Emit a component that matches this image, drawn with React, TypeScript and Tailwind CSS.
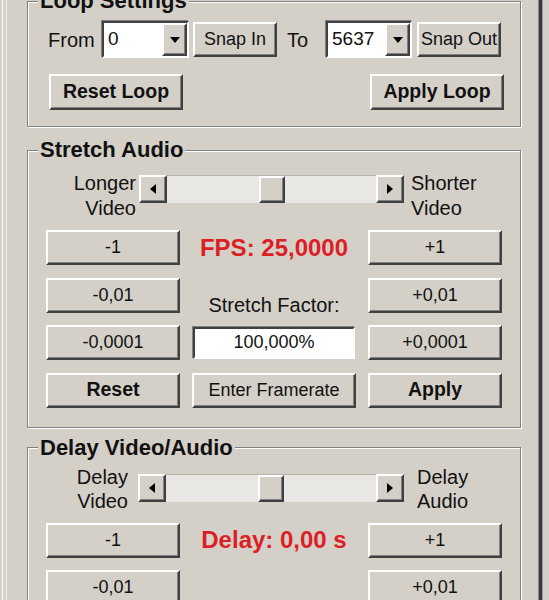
import React from "react";

const raised =
  "bg-[#d4d0c8] border-2 border-t-white border-l-white border-r-[#404040] border-b-[#404040] shadow-[inset_-1px_-1px_0_#808080]";
const sunken =
  "border-2 border-t-[#404040] border-l-[#404040] border-r-white border-b-white shadow-[-1px_-1px_0_#808080]";

function Btn({
  children,
  bold,
  className = "",
}: {
  children?: React.ReactNode;
  bold?: boolean;
  className?: string;
}) {
  return (
    <button
      type="button"
      className={`${raised} flex items-center justify-center text-[#111] ${
        bold ? "font-bold text-[19.5px]" : "text-[18px]"
      } ${className}`}
    >
      {children}
    </button>
  );
}

function Combo({ value, className = "" }: { value: string; className?: string }) {
  return (
    <div className={`${sunken} bg-white flex h-[37px] ${className}`}>
      <div className="flex-1 flex items-center pl-[4px] text-[19px] text-[#111]">{value}</div>
      <div className={`${raised} w-[25px] flex items-center justify-center`}>
        <svg width="10" height="6" viewBox="0 0 10 6">
          <path d="M0 0H10L5 6Z" fill="#000" />
        </svg>
      </div>
    </div>
  );
}

function ScrollBar({ className = "" }: { className?: string }) {
  return (
    <div className={`flex h-[28px] ${className}`}>
      <div className={`${raised} w-[28px] flex items-center justify-center`}>
        <svg width="6" height="10" viewBox="0 0 6 10">
          <path d="M6 0V10L0 5Z" fill="#000" />
        </svg>
      </div>
      <div className="flex-1 bg-[#e9e7e3] border-t border-[#b8b4ac] flex justify-center">
        <div className={`${raised} w-[26px]`} />
      </div>
      <div className={`${raised} w-[28px] flex items-center justify-center`}>
        <svg width="6" height="10" viewBox="0 0 6 10">
          <path d="M0 0V10L6 5Z" fill="#000" />
        </svg>
      </div>
    </div>
  );
}

function Group({
  title,
  className = "",
  children,
}: {
  title: string;
  className?: string;
  children?: React.ReactNode;
}) {
  return (
    <fieldset
      className={`w-[494px] shrink-0 border border-[#808080] shadow-[inset_1px_1px_0_#fff,1px_1px_0_#fff] ${className}`}
    >
      <legend className="ml-[10px] px-[2px] bg-[#d4d0c8] font-bold text-[22px] leading-[26px] text-[#111]">
        {title}
      </legend>
      {children}
    </fieldset>
  );
}

export default function App() {
  return (
    <div className="w-[549px] h-[600px] overflow-hidden bg-[#d4d0c8] flex font-['Liberation_Sans',Arial,sans-serif] text-[#111]">
      <div className="w-[2px] shrink-0" />
      <div className="w-px shrink-0 bg-white" />
      <div className="w-[3px] shrink-0" />
      <div className="w-px shrink-0 bg-[#f4f3f0]" />
      <main className="w-[531px] shrink-0 flex flex-col pl-[20px] overflow-hidden">
        <Group title="Loop Settings" className="mt-[-12px]">
          <div className="pt-[7px] pb-[16px]">
            <div className="flex items-center h-[37px]">
              <span className="w-[74px] shrink-0 pl-[20px] text-[20px]">From</span>
              <Combo value="0" className="w-[87px] shrink-0" />
              <Btn className="ml-[4px] w-[84px] h-[35px] shrink-0">Snap In</Btn>
              <span className="w-[49px] shrink-0 pl-[10px] text-[20px]">To</span>
              <Combo value="5637" className="w-[86px] shrink-0" />
              <Btn className="ml-[5px] w-[84px] h-[35px] shrink-0">Snap Out</Btn>
            </div>
            <div className="flex justify-between mt-[16px] pl-[21px] pr-[16px]">
              <Btn bold className="w-[134px] h-[36px]">
                Reset Loop
              </Btn>
              <Btn bold className="w-[134px] h-[36px]">
                Apply Loop
              </Btn>
            </div>
          </div>
        </Group>

        <Group title="Stretch Audio" className="mt-[10px]">
          <div className="pt-[8px] pb-[19px]">
            <div className="flex items-start">
              <div className="w-[111px] shrink-0 pr-[3px] text-right text-[20px] leading-[25px]">
                Longer
                <br />
                Video
              </div>
              <ScrollBar className="mt-[4px] w-[265px] shrink-0" />
              <div className="ml-[7px] text-[20px] leading-[25px]">
                Shorter
                <br />
                Video
              </div>
            </div>
            <div className="mt-[9px] ml-[18px] grid grid-cols-[134px_164px_134px] gap-x-[12px] gap-y-[12.5px] auto-rows-[35px]">
              <Btn>-1</Btn>
              <div className="flex items-center justify-center font-bold text-[24px] text-[#dc1f26]">
                FPS: 25,0000
              </div>
              <Btn>+1</Btn>

              <Btn>-0,01</Btn>
              <div className="flex items-end justify-center text-[20px] leading-[16px]">
                Stretch Factor:
              </div>
              <Btn>+0,01</Btn>

              <Btn>-0,0001</Btn>
              <div className="flex items-center">
                <div
                  className={`${sunken} bg-white mx-[1px] w-full h-[32px] flex items-center justify-center text-[18px]`}
                >
                  100,000%
                </div>
              </div>
              <Btn>+0,0001</Btn>

              <Btn bold>Reset</Btn>
              <Btn>Enter Framerate</Btn>
              <Btn bold>Apply</Btn>
            </div>
          </div>
        </Group>

        <Group title="Delay Video/Audio" className="mt-[7px]">
          <div className="pt-[4px] pb-[20px]">
            <div className="flex items-start">
              <div className="w-[110px] shrink-0 pr-[10px] text-right text-[20px] leading-[24px]">
                Delay
                <br />
                Video
              </div>
              <ScrollBar className="mt-[9px] w-[266px] shrink-0" />
              <div className="ml-[13px] text-[20px] leading-[24px]">
                Delay
                <br />
                Audio
              </div>
            </div>
            <div className="mt-[10px] ml-[18px] grid grid-cols-[134px_164px_134px] gap-x-[12px] gap-y-[12.5px] auto-rows-[35px]">
              <Btn>-1</Btn>
              <div className="flex items-center justify-center font-bold text-[24px] text-[#dc1f26]">
                Delay: 0,00 s
              </div>
              <Btn>+1</Btn>

              <Btn>-0,01</Btn>
              <div />
              <Btn>+0,01</Btn>
            </div>
          </div>
        </Group>
      </main>
      <div className="w-px shrink-0 bg-[#8a8a8a]" />
      <div className="w-[3px] shrink-0 bg-[#3a3a3a]" />
      <div className="w-px shrink-0 bg-[#9c9c9c]" />
    </div>
  );
}
